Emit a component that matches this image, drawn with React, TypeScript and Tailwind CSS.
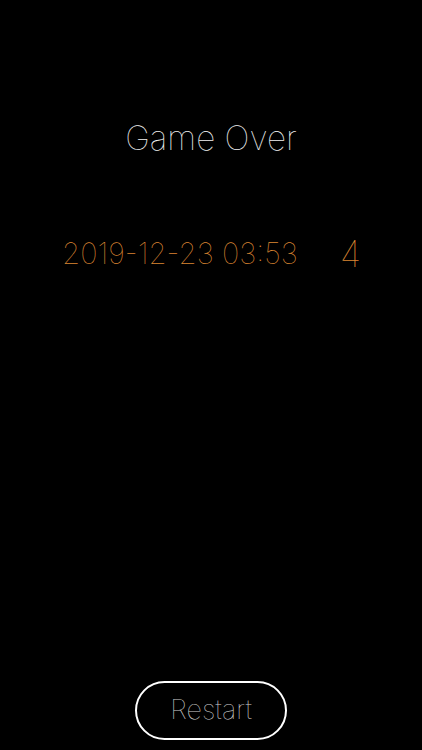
export default function App() {
  return (
    <div
      className="flex h-[750px] w-[422px] flex-col items-center bg-black"
      style={{ fontFamily: "Inter, Roboto, 'Liberation Sans', sans-serif" }}
    >
      <h1 className="mt-[118px] text-[33.3px] font-thin leading-[40px] text-[#f0f0f0]">Game Over</h1>
      <div className="mt-[76px] flex w-full items-center pl-[62px]">
        <span className="text-[29.3px] font-thin leading-[40px] text-[#dc8632]">2019-12-23 03:53</span>
        <span className="ml-[42px] text-[36px] font-thin leading-[40px] text-[#dc8632]">4</span>
      </div>
      <div className="flex-1" />
      <button className="mb-[10px] flex h-[59px] w-[152px] items-center justify-center rounded-full border-2 border-white text-[27px] font-thin text-[#cfcfcf]">
        Restart
      </button>
    </div>
  );
}
